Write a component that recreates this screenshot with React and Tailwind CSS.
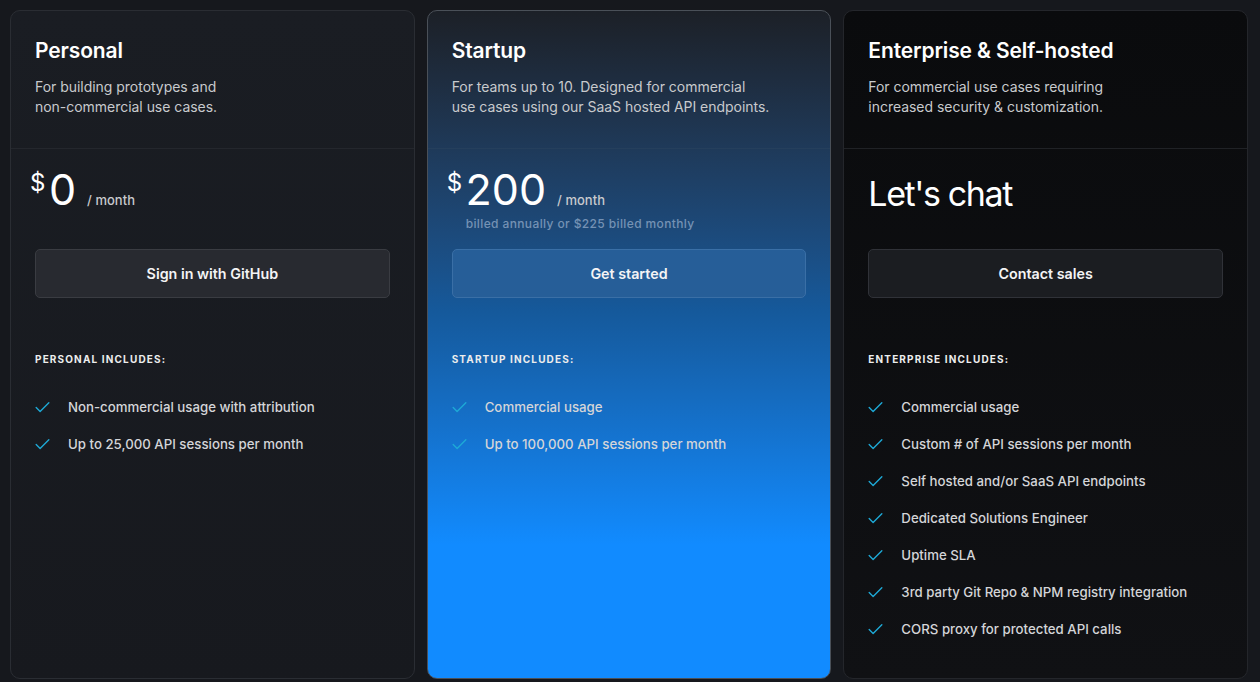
import { Check } from 'lucide-react';

const plans = [
	{
		name: 'Personal',
		desc: ['For building prototypes and', 'non-commercial use cases.'],
		price: '0',
		button: 'Sign in with GitHub',
		label: 'Personal includes:',
		card: 'bg-linear-to-b from-[#1a1d23] to-[#17191e] border-[#2a2d33]',
		btn: 'bg-[#282a30] border-[#3a3c42]',
		rule: 'border-[#24272d]',
		items: ['Non-commercial usage with attribution', 'Up to 25,000 API sessions per month'],
	},
	{
		name: 'Startup',
		desc: ['For teams up to 10. Designed for commercial', 'use cases using our SaaS hosted API endpoints.'],
		price: '200',
		note: 'billed annually or $225 billed monthly',
		button: 'Get started',
		label: 'Startup includes:',
		card: 'bg-linear-to-b from-[#1c2027] via-[#15599b] via-[45%] to-[#118bff] to-[80%] border-[#4a5058]',
		btn: 'bg-[#265e98] border-[#3a6fa6]',
		rule: 'border-[#253f5c]',
		items: ['Commercial usage', 'Up to 100,000 API sessions per month'],
	},
	{
		name: 'Enterprise & Self-hosted',
		desc: ['For commercial use cases requiring', 'increased security & customization.'],
		button: 'Contact sales',
		label: 'Enterprise includes:',
		card: 'bg-linear-to-b from-[#0a0b0d] to-[#101114] border-[#24262b]',
		btn: 'bg-[#1b1d21] border-[#303238]',
		rule: 'border-[#202226]',
		items: [
			'Commercial usage',
			'Custom # of API sessions per month',
			'Self hosted and/or SaaS API endpoints',
			'Dedicated Solutions Engineer',
			'Uptime SLA',
			'3rd party Git Repo & NPM registry integration',
			'CORS proxy for protected API calls',
		],
	},
];

function PlanCard({ plan }) {
	return (
		<div className={`h-[669px] rounded-[10px] border overflow-hidden ${plan.card}`}>
			<div className={`h-[138px] border-b px-6 pt-[25px] ${plan.rule}`}>
				<h2 className="text-[21px] leading-[30px] font-semibold text-white tracking-[-0.13px]">{plan.name}</h2>
				<p className="mt-[11px] text-[14px] leading-[20px] tracking-[-0.03px] text-[#c8cacd]">
					{plan.desc[0]}
					<br />
					{plan.desc[1]}
				</p>
			</div>

			<div className="h-[100px] px-6">
				{plan.price ? (
					<div className="pt-[10px]">
						<div className="flex items-start -ml-[5px]">
							<span className="text-[24px] leading-[32px] mt-[8px] text-white">$</span>
							<span className="ml-[3.5px] text-[43px] leading-[60px] font-normal text-white">{plan.price}</span>
							<span className="ml-[11px] mt-[31px] text-[13px] leading-[20px] font-medium tracking-[0.03px] text-[#c8cacd]">/ month</span>
						</div>
						{plan.note && (
							<p className="ml-[14px] -mt-[3px] text-[12px] leading-[16px] font-medium tracking-[0.38px] text-[#7592b4]">{plan.note}</p>
						)}
					</div>
				) : (
					<div className="pt-[21px] text-[34px] leading-[48px] font-normal tracking-[-1.4px] text-white">Let's chat</div>
				)}
			</div>

			<div className="px-6">
				<button type="button" className={`w-full h-[49px] rounded-[5px] border text-[14.3px] font-semibold text-[#f4f4f5] ${plan.btn}`}>
					{plan.button}
				</button>

				<h3 className="mt-[55px] text-[10px] leading-[12px] font-bold uppercase tracking-[1.15px] text-[#eceded]">{plan.label}</h3>

				<ul className="mt-[33px] flex flex-col gap-[17.05px]">
					{plan.items.map(item => (
						<li key={item} className="flex items-center h-[20px] text-[13.25px] font-medium text-[#d4d5d8]">
							<Check size={19} strokeWidth={1.75} className="text-[#1ea9d6] shrink-0 -ml-[2px] -mt-[1px]" />
							<span className="ml-[16px]">{item}</span>
						</li>
					))}
				</ul>
			</div>
		</div>
	);
}

export default function App() {
	return (
		<div className="h-[682px] overflow-hidden bg-[#16181d] pl-[10px] pr-[12px] pt-[10px] font-['Inter','Liberation_Sans',sans-serif]">
			<div className="grid grid-cols-3 gap-[12px]">
				{plans.map(plan => (
					<PlanCard key={plan.name} plan={plan} />
				))}
			</div>
		</div>
	);
}
